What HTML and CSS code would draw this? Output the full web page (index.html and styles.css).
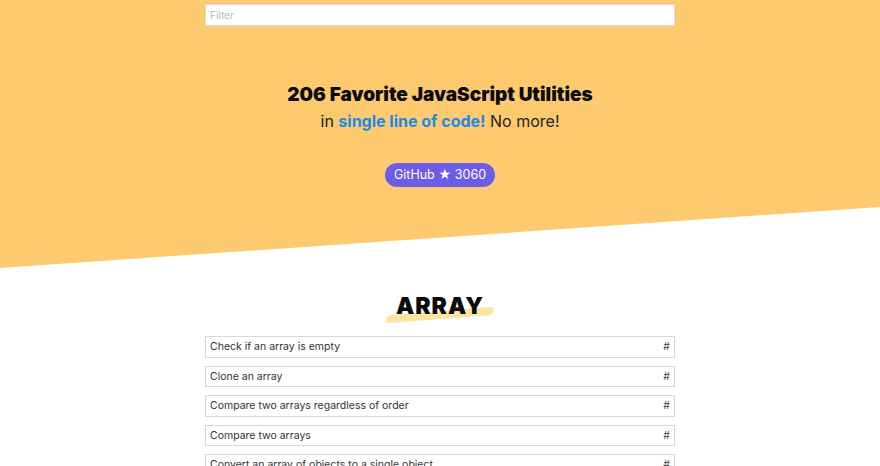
FILE: index.html
```html
<!DOCTYPE html>
<html>
<head>
<meta charset="utf-8">
<link rel="stylesheet" href="styles.css">
</head>
<body>
<header class="hero">
  <div class="filter-wrap"><input class="filter" type="text" placeholder="Filter"></div>
  <h1 class="title">206 Favorite JavaScript Utilities</h1>
  <p class="subtitle">in <strong>single line of code!</strong> No more!</p>
  <a class="github">GitHub ★ 3060</a>
</header>
<main class="content">
  <h2 class="section"><span class="mark">ARRAY</span></h2>
  <ul class="list">
    <li class="item"><span>Check if an array is empty</span><span class="hash">#</span></li>
    <li class="item"><span>Clone an array</span><span class="hash">#</span></li>
    <li class="item"><span>Compare two arrays regardless of order</span><span class="hash">#</span></li>
    <li class="item"><span>Compare two arrays</span><span class="hash">#</span></li>
    <li class="item"><span>Convert an array of objects to a single object</span><span class="hash">#</span></li>
  </ul>
</main>
</body>
</html>
```
FILE: styles.css
```css
* { box-sizing: border-box; }
html, body { margin: 0; padding: 0; }
body {
  font-family: Inter, "Noto Sans", sans-serif;
  color: #111;
  background: #fff;
  overflow: hidden;
}
.hero {
  background: #fdca6f;
  height: 268px;
  clip-path: polygon(0 0, 100% 0, 100% 207px, 0 100%);
  display: flex;
  flex-direction: column;
  align-items: center;
  padding-top: 4px;
}
.filter-wrap { width: 470px; }
.filter {
  display: block;
  width: 100%;
  height: 22px;
  border: 1px solid #e2ded6;
  background: #fff;
  font-family: Inter, sans-serif;
  font-size: 10px;
  padding: 0 4px;
  outline: none;
}
.filter::placeholder { color: #b8b8b8; }
.title {
  margin: 57px 0 0;
  font-size: 19px;
  font-weight: 900;
  line-height: 24px;
  color: #0a0a0a;
}
.subtitle {
  margin: 2px 0 0;
  font-size: 16px;
  line-height: 24px;
  color: #222;
}
.subtitle strong { color: #1e88e5; font-weight: 700; }
.github {
  margin-top: 30px;
  background: #6c5ce7;
  color: #fff;
  font-size: 12.5px;
  line-height: 24px;
  height: 24px;
  padding: 0 8.5px;
  border-radius: 12px;
}
.content {
  display: flex;
  flex-direction: column;
  align-items: center;
}
.section {
  margin: 21px 0 0;
  font-size: 23px;
  font-weight: 900;
  line-height: 34px;
  letter-spacing: 1px;
  color: #0a0a0a;
}
.mark {
  position: relative;
  display: inline-block;
  z-index: 0;
}
.mark::before {
  content: "";
  position: absolute;
  z-index: -1;
  left: -10px;
  right: -10px;
  bottom: 4px;
  height: 8px;
  background: #fde4a2;
  border-radius: 6px 4px 6px 4px;
  transform: rotate(-4.5deg);
}
.list {
  list-style: none;
  margin: 13px 0 0;
  padding: 0;
  width: 470px;
  display: flex;
  flex-direction: column;
  gap: 8px;
}
.item {
  height: 21.5px;
  border: 1px solid #d8d8d8;
  display: flex;
  justify-content: space-between;
  align-items: center;
  padding: 0 4px;
  font-size: 10.5px;
  color: #333;
}
.hash { color: #444; }
```
